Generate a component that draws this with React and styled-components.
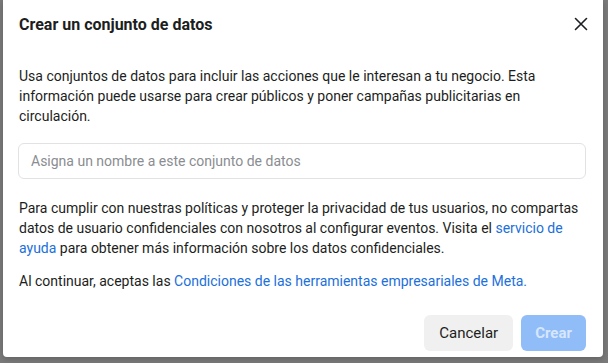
import React, { useState } from "react";
import styled, { createGlobalStyle } from "styled-components";

const GlobalStyle = createGlobalStyle`
  html, body {
    margin: 0;
    padding: 0;
    background: #7a7a7a;
    font-family: Roboto, "Liberation Sans", Arial, sans-serif;
    -webkit-font-smoothing: antialiased;
  }
`;

const Backdrop = styled.div`
  width: 608px;
  height: 363px;
  box-sizing: border-box;
  padding: 0 5px 6px 3px;
  display: flex;
  overflow: hidden;
`;

const Dialog = styled.div`
  flex: 1;
  background: #fff;
  border-radius: 0 0 4px 4px;
  display: flex;
  flex-direction: column;
  box-shadow: 0 2px 6px rgba(0, 0, 0, 0.2);
`;

const Header = styled.div`
  height: 48px;
  display: flex;
  align-items: center;
  justify-content: space-between;
  padding: 0 14px 0 16px;
`;

const Title = styled.h2`
  margin: 0;
  font-size: 16px;
  font-weight: 700;
  color: #1c1e21;
`;

const CloseButton = styled.button`
  border: 0;
  background: transparent;
  padding: 0;
  width: 16px;
  height: 16px;
  display: flex;
  align-items: center;
  justify-content: center;
  cursor: pointer;
`;

const Body = styled.div`
  display: flex;
  flex-direction: column;
  padding: 18px 17px 0 15px;
`;

const Paragraph = styled.p`
  margin: 0 0 ${(p) => p.gap || 0}px 1px;
  font-size: 14px;
  line-height: 20px;
  color: #1c1e21;
`;

const Link = styled.a`
  color: #216fdb;
  text-decoration: none;
  cursor: pointer;
`;

const NameInput = styled.input`
  box-sizing: border-box;
  height: 36px;
  width: 100%;
  margin: 0 0 19px;
  border: 1px solid #e0e2e5;
  border-radius: 6px;
  padding: 0 12px;
  font-family: inherit;
  font-size: 14px;
  color: #1c1e21;
  outline: none;

  &::placeholder {
    color: #8a8d91;
  }
`;

const Footer = styled.div`
  display: flex;
  justify-content: flex-end;
  gap: 8px;
  padding: 24px 17px 0 15px;
`;

const Button = styled.button`
  height: 36px;
  border: 0;
  border-radius: 6px;
  padding: 0 ${(p) => (p.primary ? 14 : 15)}px;
  font-family: inherit;
  font-size: 15px;
  font-weight: ${(p) => (p.primary ? 700 : 400)};
  background: ${(p) => (p.primary ? "#90bcf8" : "#f0f0f0")};
  color: ${(p) => (p.primary ? "#d6e6fc" : "#1c1e21")};
  cursor: ${(p) => (p.disabled ? "default" : "pointer")};
`;

const CloseIcon = () => (
  <svg width="14" height="14" viewBox="0 0 14 14">
    <path
      d="M1.5 1.5 L12.5 12.5 M12.5 1.5 L1.5 12.5"
      stroke="#1c1e21"
      strokeWidth="1.6"
      strokeLinecap="round"
    />
  </svg>
);

export default function App() {
  const [name, setName] = useState("");

  return (
    <>
      <GlobalStyle />
      <Backdrop>
        <Dialog>
          <Header>
            <Title>Crear un conjunto de datos</Title>
            <CloseButton aria-label="Cerrar">
              <CloseIcon />
            </CloseButton>
          </Header>
          <Body>
            <Paragraph gap={17}>
              Usa conjuntos de datos para incluir las acciones que le interesan a tu
              negocio. Esta información puede usarse para crear públicos y poner
              campañas publicitarias en circulación.
            </Paragraph>
            <NameInput
              value={name}
              onChange={(e) => setName(e.target.value)}
              placeholder="Asigna un nombre a este conjunto de datos"
            />
            <Paragraph gap={13}>
              Para cumplir con nuestras políticas y proteger la privacidad de tus
              usuarios, no compartas datos de usuario confidenciales con nosotros al
              configurar eventos. Visita el <Link>servicio de ayuda</Link> para
              obtener más información sobre los datos confidenciales.
            </Paragraph>
            <Paragraph>
              Al continuar, aceptas las{" "}
              <Link>Condiciones de las herramientas empresariales de Meta.</Link>
            </Paragraph>
          </Body>
          <Footer>
            <Button>Cancelar</Button>
            <Button primary disabled={!name}>
              Crear
            </Button>
          </Footer>
        </Dialog>
      </Backdrop>
    </>
  );
}
